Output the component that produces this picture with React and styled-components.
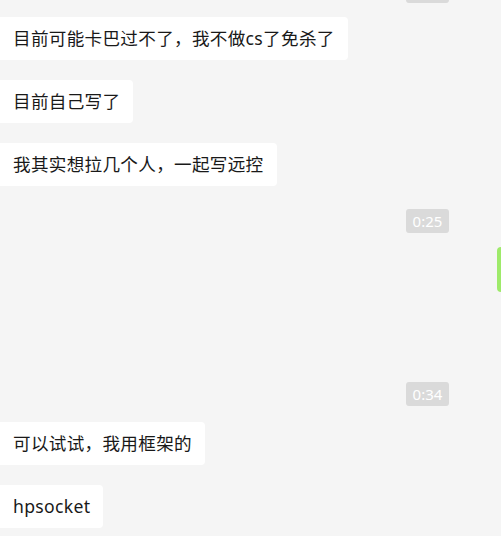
import React from "react";
import styled, { createGlobalStyle } from "styled-components";

const GlobalStyle = createGlobalStyle`
  html, body {
    margin: 0;
    padding: 0;
    background: #f5f5f5;
    overflow: hidden;
  }
`;

const ChatPane = styled.div`
  display: flex;
  flex-direction: column;
  width: 501px;
  height: 536px;
  overflow: hidden;
  background: #f5f5f5;
  font-family: "Microsoft YaHei", "Noto Sans", "Noto Sans CJK SC", sans-serif;
`;

const TimeRow = styled.div`
  display: flex;
  justify-content: flex-end;
  padding-right: 52px;
  margin-top: ${({ gap }) => gap}px;
`;

const TimeStamp = styled.span`
  display: inline-flex;
  align-items: center;
  justify-content: center;
  width: 43px;
  height: 24px;
  border-radius: 3px;
  background: #dadada;
  color: #ffffff;
  font-size: 15px;
  font-family: "Noto Sans", "Liberation Sans", sans-serif;
`;

const Row = styled.div`
  display: flex;
  justify-content: ${({ mine }) => (mine ? "flex-end" : "flex-start")};
  margin-top: ${({ gap }) => gap}px;
`;

const Bubble = styled.div`
  margin-left: -4px;
  padding: 9px 13px 9px 17px;
  background: #ffffff;
  border-radius: 4px;
  color: #191919;
  font-size: 17.6px;
  letter-spacing: 0.3px;
  line-height: 25px;
  white-space: nowrap;
`;

const MineBubble = styled.div`
  width: 80px;
  height: 45px;
  margin-right: -76px;
  background: #9eea6a;
  border-radius: 4px;
`;

const messages = [
  { text: "目前可能卡巴过不了，我不做cs了免杀了", gap: 14 },
  { text: "目前自己写了", gap: 20 },
  { text: "我其实想拉几个人，一起写远控", gap: 20 },
];

const later = [
  { text: "可以试试，我用框架的", gap: 16 },
  { text: "hpsocket", gap: 20 },
];

export default function App() {
  return (
    <ChatPane>
      <GlobalStyle />
      {/* only the bottom edge of this pill is inside the window */}
      <TimeRow gap={-21}>
        <TimeStamp />
      </TimeRow>
      {messages.map((m) => (
        <Row key={m.text} gap={m.gap}>
          <Bubble>{m.text}</Bubble>
        </Row>
      ))}
      <TimeRow gap={23}>
        <TimeStamp>0:25</TimeStamp>
      </TimeRow>
      <Row mine gap={14}>
        <MineBubble />
      </Row>
      <TimeRow gap={90}>
        <TimeStamp>0:34</TimeStamp>
      </TimeRow>
      {later.map((m) => (
        <Row key={m.text} gap={m.gap}>
          <Bubble>{m.text}</Bubble>
        </Row>
      ))}
    </ChatPane>
  );
}
